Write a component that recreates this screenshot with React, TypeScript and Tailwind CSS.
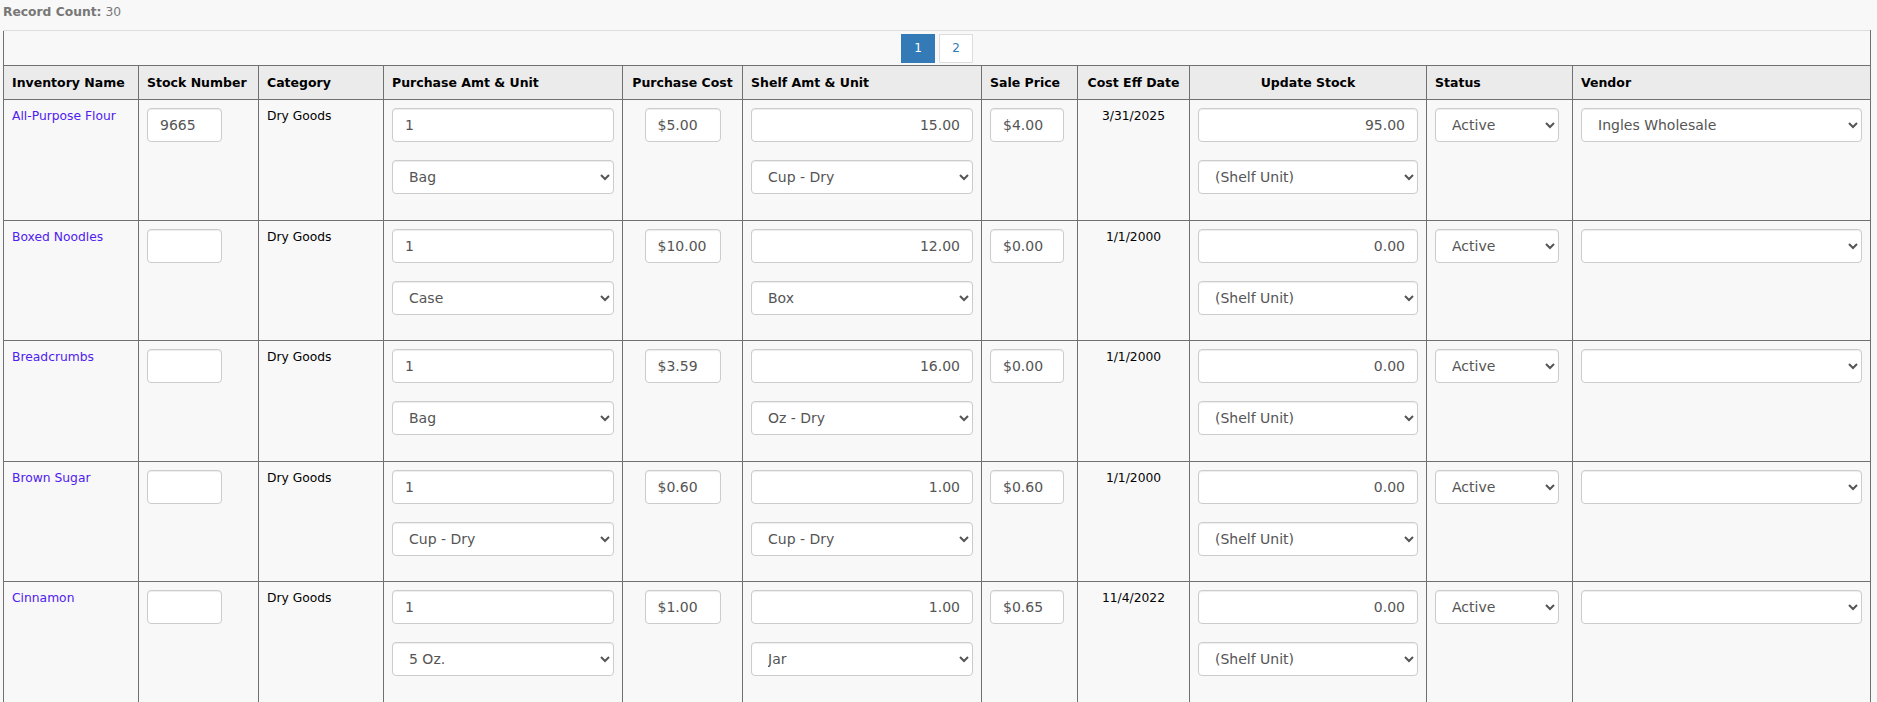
import React from 'react';

type Row = {
  name: string;
  stock: string;
  category: string;
  purchaseAmt: string;
  purchaseUnit: string;
  purchaseCost: string;
  shelfAmt: string;
  shelfUnit: string;
  salePrice: string;
  costDate: string;
  update: string;
  status: string;
  vendor: string;
};

const rows: Row[] = [
  { name: 'All-Purpose Flour', stock: '9665', category: 'Dry Goods', purchaseAmt: '1', purchaseUnit: 'Bag', purchaseCost: '$5.00', shelfAmt: '15.00', shelfUnit: 'Cup - Dry', salePrice: '$4.00', costDate: '3/31/2025', update: '95.00', status: 'Active', vendor: 'Ingles Wholesale' },
  { name: 'Boxed Noodles', stock: '', category: 'Dry Goods', purchaseAmt: '1', purchaseUnit: 'Case', purchaseCost: '$10.00', shelfAmt: '12.00', shelfUnit: 'Box', salePrice: '$0.00', costDate: '1/1/2000', update: '0.00', status: 'Active', vendor: '' },
  { name: 'Breadcrumbs', stock: '', category: 'Dry Goods', purchaseAmt: '1', purchaseUnit: 'Bag', purchaseCost: '$3.59', shelfAmt: '16.00', shelfUnit: 'Oz - Dry', salePrice: '$0.00', costDate: '1/1/2000', update: '0.00', status: 'Active', vendor: '' },
  { name: 'Brown Sugar', stock: '', category: 'Dry Goods', purchaseAmt: '1', purchaseUnit: 'Cup - Dry', purchaseCost: '$0.60', shelfAmt: '1.00', shelfUnit: 'Cup - Dry', salePrice: '$0.60', costDate: '1/1/2000', update: '0.00', status: 'Active', vendor: '' },
  { name: 'Cinnamon', stock: '', category: 'Dry Goods', purchaseAmt: '1', purchaseUnit: '5 Oz.', purchaseCost: '$1.00', shelfAmt: '1.00', shelfUnit: 'Jar', salePrice: '$0.65', costDate: '11/4/2022', update: '0.00', status: 'Active', vendor: '' },
];

const headers: { label: string; width: number; center?: boolean }[] = [
  { label: 'Inventory Name', width: 135 },
  { label: 'Stock Number', width: 120 },
  { label: 'Category', width: 125 },
  { label: 'Purchase Amt & Unit', width: 239 },
  { label: 'Purchase Cost', width: 120, center: true },
  { label: 'Shelf Amt & Unit', width: 239 },
  { label: 'Sale Price', width: 96 },
  { label: 'Cost Eff Date', width: 112, center: true },
  { label: 'Update Stock', width: 237, center: true },
  { label: 'Status', width: 146 },
  { label: 'Vendor', width: 298 },
];

const inputCls =
  'block h-[34px] bg-white border border-[#ccc] rounded-[4px] px-[12px] py-[6px] text-[14px] text-[#555] shadow-[inset_0_1px_1px_rgba(0,0,0,0.075)] outline-none';

const Select = ({ value, className }: { value: string; className: string }) => (
  <select defaultValue={value} className={`${inputCls} ${className}`}>
    <option value={value}>{value}</option>
  </select>
);

const tdCls = 'border border-[#707070] align-top px-[8px] pt-[8px] pb-[7.6px] bg-[#f8f8f8] text-[12.3px] leading-4';

export default function App() {
  return (
    <div className="min-h-screen bg-[#f8f8f8] font-['DejaVu_Sans',sans-serif] text-black">
      <div className="h-[30px] pl-[3px] pt-[4px] text-[12.3px] leading-4 text-[#777]">
        <span className="font-bold">Record Count:</span> 30
      </div>
      <table className="ml-[3px] w-[1868px] table-fixed border-collapse">
        <colgroup>
          {headers.map((h) => (
            <col key={h.label} style={{ width: h.width }} />
          ))}
        </colgroup>
        <tbody>
          <tr>
            <td
              colSpan={11}
              className="h-[35px] border-x border-b border-x-[#707070] border-b-[#707070] border-t border-t-[#ddd] bg-[#f8f8f8] p-0 text-center"
            >
              <div className="flex justify-center gap-[4px]">
                <span className="flex h-[29px] w-[34px] items-center justify-center border border-[#337ab7] bg-[#337ab7] text-[12px] text-white">
                  1
                </span>
                <span className="flex h-[29px] w-[34px] items-center justify-center border border-[#ddd] bg-white text-[12px] text-[#337ab7]">
                  2
                </span>
              </div>
            </td>
          </tr>
          <tr>
            {headers.map((h) => (
              <th
                key={h.label}
                className={`h-[34px] border border-[#707070] bg-[#ebebeb] px-[8px] text-[12.5px] font-bold leading-4 whitespace-nowrap ${
                  h.center ? 'text-center' : 'text-left'
                }`}
              >
                {h.label}
              </th>
            ))}
          </tr>
          {rows.map((r) => (
            <tr key={r.name}>
              <td className={tdCls}>
                <a href="#" className="text-[#5020f0] no-underline">
                  {r.name}
                </a>
              </td>
              <td className={tdCls}>
                <input defaultValue={r.stock} className={`${inputCls} w-[75px]`} />
              </td>
              <td className={tdCls}>{r.category}</td>
              <td className={tdCls}>
                <input defaultValue={r.purchaseAmt} className={`${inputCls} w-full mb-[18px]`} />
                <Select value={r.purchaseUnit} className="w-full mb-[18px]" />
              </td>
              <td className={tdCls}>
                <input defaultValue={r.purchaseCost} className={`${inputCls} w-[76px] mx-auto`} />
              </td>
              <td className={tdCls}>
                <input defaultValue={r.shelfAmt} className={`${inputCls} w-full mb-[18px] text-right`} />
                <Select value={r.shelfUnit} className="w-full mb-[18px]" />
              </td>
              <td className={tdCls}>
                <input defaultValue={r.salePrice} className={`${inputCls} w-[74px]`} />
              </td>
              <td className={`${tdCls} text-center`}>{r.costDate}</td>
              <td className={tdCls}>
                <input defaultValue={r.update} className={`${inputCls} w-full mb-[18px] text-right`} />
                <Select value="(Shelf Unit)" className="w-full mb-[18px]" />
              </td>
              <td className={tdCls}>
                <Select value={r.status} className="w-[124px]" />
              </td>
              <td className={tdCls}>
                <Select value={r.vendor} className="w-full" />
              </td>
            </tr>
          ))}
        </tbody>
      </table>
    </div>
  );
}
